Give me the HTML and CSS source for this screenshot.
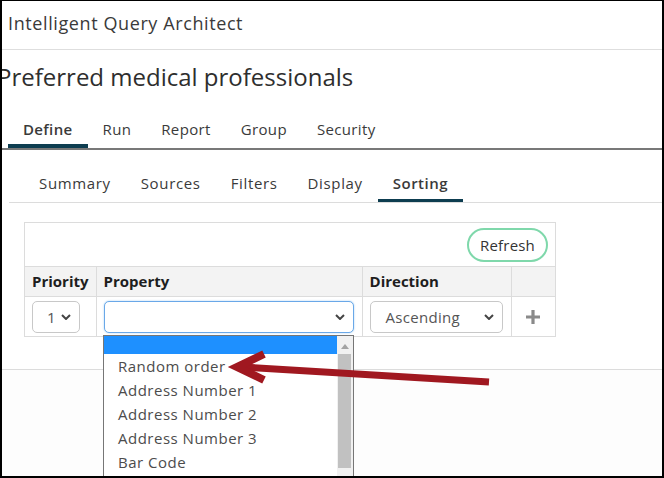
FILE: index.html
```html
<!DOCTYPE html>
<html lang="en">
<head>
<meta charset="utf-8">
<title>Intelligent Query Architect</title>
<link rel="stylesheet" href="styles.css">
</head>
<body>
<div class="frame">
  <header class="app-bar">Intelligent Query Architect</header>
  <h1 class="page-title">Preferred medical professionals</h1>

  <nav class="tabs">
    <span class="tab active">Define</span>
    <span class="tab">Run</span>
    <span class="tab">Report</span>
    <span class="tab">Group</span>
    <span class="tab">Security</span>
  </nav>

  <section class="panel">
    <nav class="subtabs">
      <span class="subtab">Summary</span>
      <span class="subtab">Sources</span>
      <span class="subtab">Filters</span>
      <span class="subtab">Display</span>
      <span class="subtab active">Sorting</span>
    </nav>

    <div class="sort-box">
      <div class="toolbar">
        <button class="refresh" type="button">Refresh</button>
      </div>
      <table class="sort-table">
        <thead>
          <tr>
            <th class="col-priority">Priority</th>
            <th class="col-property">Property</th>
            <th class="col-direction">Direction</th>
            <th class="col-add"></th>
          </tr>
        </thead>
        <tbody>
          <tr>
            <td>
              <div class="select select-priority"><span>1</span><svg class="chev" viewBox="0 0 10 6"><path d="M1 1l4 4 4-4"/></svg></div>
            </td>
            <td>
              <div class="select select-property focused"><span></span><svg class="chev" viewBox="0 0 10 6"><path d="M1 1l4 4 4-4"/></svg></div>
            </td>
            <td>
              <div class="select select-direction"><span>Ascending</span><svg class="chev" viewBox="0 0 10 6"><path d="M1 1l4 4 4-4"/></svg></div>
            </td>
            <td class="add-cell">
              <svg class="plus" viewBox="0 0 14 14"><path d="M7 0v14M0 7h14"/></svg>
            </td>
          </tr>
        </tbody>
      </table>
    </div>
  </section>

  <div class="dropdown">
    <ul class="options">
      <li class="option selected">&nbsp;</li>
      <li class="option">Random order</li>
      <li class="option">Address Number 1</li>
      <li class="option">Address Number 2</li>
      <li class="option">Address Number 3</li>
      <li class="option">Bar Code</li>
    </ul>
    <div class="scrollbar">
      <svg class="scroll-up" viewBox="0 0 8 5"><path d="M0 5L4 0L8 5Z"/></svg>
      <div class="thumb"></div>
    </div>
  </div>

  <svg class="callout" viewBox="0 0 664 478" width="664" height="478">
    <path class="callout-shaft" d="M242 367L489 382"/>
    <path class="callout-head" d="M264 354L237 367L264 380"/>
  </svg>
</div>
</body>
</html>
```

FILE: styles.css
```css
* { box-sizing: border-box; }

html, body {
  margin: 0;
  padding: 0;
  background: #fff;
}

body {
  font-family: "Open Sans", "DejaVu Sans", sans-serif;
  color: #333;
}

.frame {
  position: relative;
  width: 664px;
  height: 478px;
  border-style: solid;
  border-color: #000;
  border-width: 1px 2px 2px 2px;
  overflow: hidden;
  background: #fdfdfd;
}

.app-bar {
  height: 49px;
  padding: 10px 0 0 6px;
  font-size: 18px;
  line-height: 24px;
  letter-spacing: 0.6px;
  color: #3a3a3a;
  border-bottom: 1px solid #dedede;
  background: #fff;
}

.page-title {
  margin: 0 0 0 -5px;
  padding: 13px 0 0;
  height: 54px;
  font-size: 24px;
  line-height: 28px;
  font-weight: 400;
  color: #2e2e2e;
  white-space: nowrap;
  background: #fff;
}

.tabs {
  display: flex;
  padding-left: 6px;
  border-bottom: 2px solid #787878;
  background: #fff;
}

.tab {
  padding: 14px 15px 4px;
  font-size: 15px;
  line-height: 22px;
  letter-spacing: 0.35px;
  color: #3a3a3a;
  border-bottom: 4px solid transparent;
}

.tab.active {
  font-weight: 600;
  border-bottom-color: #0d3d50;
}

.panel {
  height: 220px;
  border-bottom: 1px solid #dcdcdc;
  background: #fff;
}

.subtabs {
  display: flex;
  margin: 0 0 0 7px;
  padding: 22px 0 0 15px;
  border-bottom: 1px solid #dcdcdc;
}

.subtab {
  padding: 0 15px 5px;
  font-size: 15px;
  line-height: 22px;
  letter-spacing: 0.65px;
  color: #3a3a3a;
  border-bottom: 3px solid transparent;
}

.subtab.active {
  font-weight: 600;
  letter-spacing: 0.5px;
  border-bottom-color: #0d3d50;
}

.sort-box {
  margin: 19px 0 0 22px;
  width: 532px;
  border: 1px solid #dcdcdc;
}

.toolbar {
  display: flex;
  justify-content: flex-end;
  padding: 5px 7px 4px;
  border-bottom: 1px solid #dcdcdc;
}

.refresh {
  height: 34px;
  padding: 0 11px;
  border: 2px solid #7fd8ab;
  border-radius: 17px;
  background: #fff;
  font-family: inherit;
  font-size: 15px;
  letter-spacing: 0.2px;
  color: #333;
}

.sort-table {
  width: 100%;
  border-collapse: collapse;
}

.sort-table th {
  height: 29px;
  padding: 0 7px;
  text-align: left;
  font-size: 15px;
  font-weight: 700;
  color: #1e1e1e;
  background: #f3f3f3;
  border-right: 1px solid #dcdcdc;
  border-bottom: 1px solid #dcdcdc;
}

.sort-table td {
  height: 40px;
  padding: 1px 7px 0;
  border-right: 1px solid #dcdcdc;
}

.sort-table th:last-child,
.sort-table td:last-child { border-right: none; }

.col-priority { width: 71px; }
.col-property { width: 266px; }
.col-direction { width: 149px; }

.select {
  display: flex;
  align-items: center;
  justify-content: space-between;
  height: 32px;
  padding: 0 8px 0 14px;
  border: 1px solid #c8c8c8;
  border-radius: 5px;
  background: #fff;
  font-size: 15px;
  letter-spacing: 0.3px;
  color: #555;
}

.select-priority { width: 48px; }
.select-property { width: 250px; }
.select-direction { width: 133px; padding-left: 15px; }

.select.focused {
  border-color: #6aa8e8;
  box-shadow: 0 0 2px rgba(102, 175, 233, 0.6);
}

.chev {
  width: 10px;
  height: 6px;
  fill: none;
  stroke: #444;
  stroke-width: 2;
}

.add-cell { text-align: center; }

.plus {
  display: block;
  margin: 0 auto;
  width: 14px;
  height: 14px;
  stroke: #8a8a8a;
  stroke-width: 3.2;
}

.dropdown {
  position: absolute;
  left: 101px;
  top: 334px;
  width: 251px;
  height: 150px;
  display: flex;
  border: 1px solid #767676;
  background: #fff;
}

.options {
  flex: 1;
  margin: 0;
  padding: 0;
  list-style: none;
}

.option {
  height: 24px;
  padding-left: 14px;
  font-size: 15px;
  line-height: 24px;
  letter-spacing: 0.5px;
  color: #4c4c4c;
  white-space: nowrap;
}

.option.selected {
  height: 18px;
  background: #1e90ff;
}

.scrollbar {
  position: relative;
  width: 16px;
  background: #f1f1f1;
}

.scroll-up {
  position: absolute;
  left: 4px;
  top: 8px;
  width: 8px;
  height: 5px;
  fill: #a3a3a3;
}

.thumb {
  position: absolute;
  left: 1px;
  right: 2px;
  top: 18px;
  height: 114px;
  background: #c1c1c1;
}

.callout {
  position: absolute;
  left: -2px;
  top: -1px;
  pointer-events: none;
}

.callout-shaft {
  stroke: #a01820;
  stroke-width: 7;
  fill: none;
}

.callout-head {
  stroke: #a01820;
  stroke-width: 8;
  fill: none;
  stroke-linejoin: miter;
}
```
